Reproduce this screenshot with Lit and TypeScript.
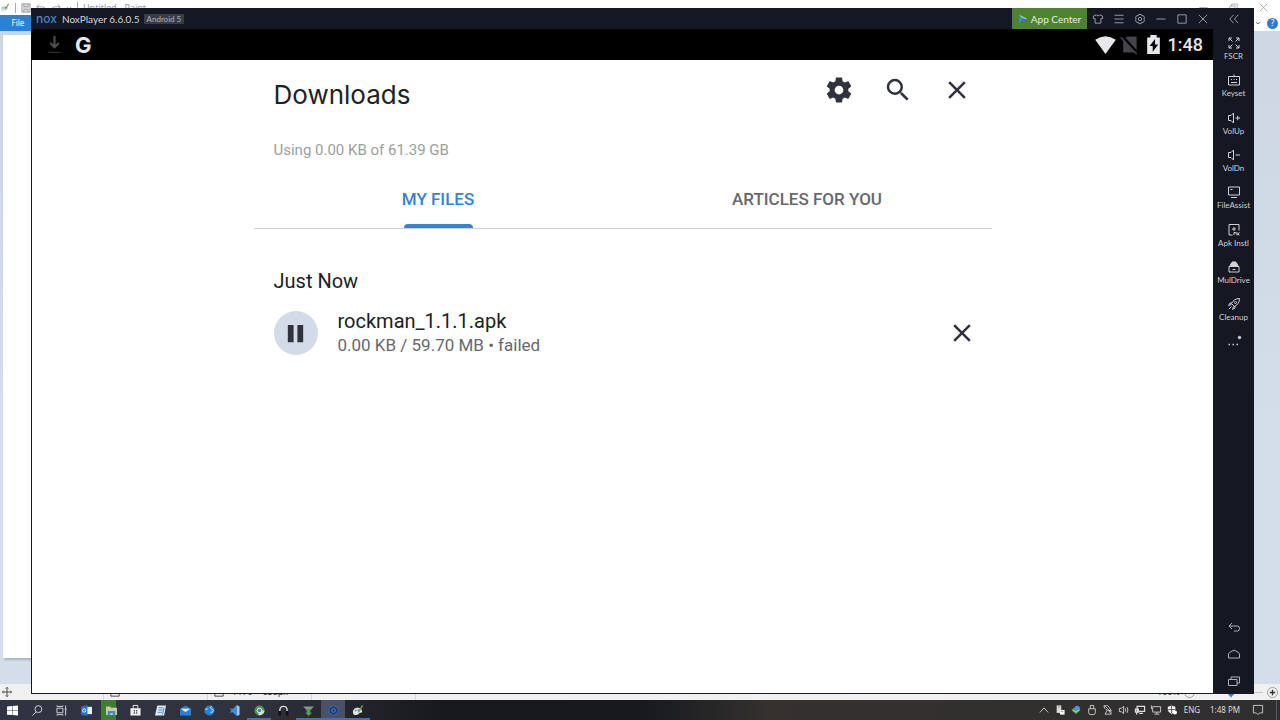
import { LitElement, html, css, svg } from 'lit';
import { customElement, property } from 'lit/decorators.js';

// line icons use currentColor, everything on a 24 unit grid
const ICONS = {
  gear: svg`<path fill="currentColor" d="M19.43 12.98c.04-.32.07-.64.07-.98s-.03-.66-.07-.98l2.11-1.65c.19-.15.24-.42.12-.64l-2-3.46c-.12-.22-.39-.3-.61-.22l-2.49 1c-.52-.4-1.08-.73-1.69-.98l-.38-2.65A.49.49 0 0 0 14 2h-4c-.25 0-.46.18-.49.42l-.38 2.65c-.61.25-1.17.59-1.69.98l-2.49-1c-.23-.09-.49 0-.61.22l-2 3.46c-.13.22-.07.49.12.64l2.11 1.65c-.04.32-.07.65-.07.98s.03.66.07.98l-2.11 1.65c-.19.15-.24.42-.12.64l2 3.46c.12.22.39.3.61.22l2.49-1c.52.4 1.08.73 1.69.98l.38 2.65c.03.24.24.42.49.42h4c.25 0 .46-.18.49-.42l.38-2.65c.61-.25 1.17-.59 1.69-.98l2.49 1c.23.09.49 0 .61-.22l2-3.46c.12-.22.07-.49-.12-.64zM12 15.5a3.5 3.5 0 1 1 0-7 3.5 3.5 0 0 1 0 7z"/>`,
  search: svg`<path fill="currentColor" d="M15.5 14h-.79l-.28-.27A6.47 6.47 0 0 0 16 9.5 6.5 6.5 0 1 0 9.5 16c1.61 0 3.09-.59 4.23-1.57l.27.28v.79l5 4.99L20.49 19zm-6 0a4.5 4.5 0 1 1 0-9 4.5 4.5 0 0 1 0 9z"/>`,
  close: svg`<path fill="currentColor" d="M19 6.41 17.59 5 12 10.59 6.41 5 5 6.41 10.59 12 5 17.59 6.41 19 12 13.41 17.59 19 19 17.59 13.41 12z"/>`,
  pause: svg`<path fill="currentColor" d="M4 3h6v18H4zm10 0h6v18h-6z"/>`,
  play: svg`<path fill="#3f8fe0" d="M3 1v22l8-11z"/><path fill="#7cc4f0" d="M3 1l20 11H11z"/><path fill="#3a6fd0" d="M3 23l20-11H11z"/><circle cx="11" cy="12" r="2.5" fill="#4e8230"/>`,
  shirt: svg`<path d="M8 2 1 5v6h4v11h14V11h4V5l-7-3c-1 3-7 3-8 0z"/>`,
  menu: svg`<path d="M1 3h22M1 12h22M1 21h22"/>`,
  cog: svg`<path d="M9 1h6l1 3 4 0 3 5-2 3 2 3-3 5h-4l-1 3H9l-1-3H4l-3-5 2-3-2-3 3-5h4z"/><circle cx="12" cy="12" r="4"/>`,
  minimize: svg`<path d="M1 12h22"/>`,
  maximize: svg`<path d="M2 2h20v20H2z"/>`,
  cross: svg`<path d="m2 2 20 20M22 2 2 22"/>`,
  collapse: svg`<path d="M11 2 2 12l9 10M22 2l-9 10 9 10"/>`,
  restore: svg`<path d="M2 8h14v14H2zM7 8V3h15v14h-6"/>`,
  chevron: svg`<path d="m3 8 9 8 9-8" stroke-width="4"/>`,
  up: svg`<path d="m2 18 10-11 10 11"/>`,
  fullscreen: svg`<path d="M2 8V2h6M2 2l7 7M22 8V2h-6M22 2l-7 7M2 16v6h6M2 22l7-7M22 16v6h-6M22 22l-7-7"/>`,
  keyset: svg`<path d="M1 5h22v17H1zM12 5V1M6 17h12M6 11h2M11 11h2M16 11h2"/>`,
  volUp: svg`<path d="M11 2v20l-5-5H1V7h5zM15 12h9M19.5 7.5v9"/>`,
  volDown: svg`<path d="M11 2v20l-5-5H1V7h5zM15 12h9"/>`,
  monitor: svg`<path d="M1 2h22v16H1zM6 23h12M5 7h4"/>`,
  apk: svg`<path d="M9 22H2V1h20v12M12 6v8M8 10h8M12 17v5M12 17h3v2M18 16v7M23 17l-4 3 4 2"/>`,
  drive: svg`<path d="M2 11h20v11H2z"/><path fill="currentColor" d="m4 10 2-5h12l2 5zM8 4V2h8v2"/><path d="M9 17h6"/>`,
  rocket: svg`<path d="M23 1c-8 0-13 4-16 10l6 6c6-3 10-8 10-16zM8 10H4l-3 5 6-2M14 16v4l-5 3 2-6M2 22l5-5"/><circle cx="15" cy="9" r="2"/>`,
  more: svg`<path d="M1 17h3M9 17h3M17 17h3" stroke-width="3"/><circle cx="23" cy="3" r="2.5" fill="currentColor"/>`,
  back: svg`<path d="M8 4 2 10l6 6M2 10h17q4 0 4 5t-4 5h-7"/>`,
  home: svg`<path d="M1 12q0-3 11-8 11 5 11 8v8H1z"/>`,
  recent: svg`<path d="M1 9h17v12H1zM6 9V4h17v12h-5"/>`,
  download: svg`<path d="M12 0v14M6 10l6 6 6-6" stroke-width="3"/><path d="M3 23h18" stroke-width="1"/>`,
  wifi: svg`<path fill="currentColor" stroke="none" d="M12 24-1 6q13-9 26 0z"/>`,
  noSim: svg`<path fill="currentColor" stroke="none" d="M9 2h12v20H4V7z"/><path stroke="#000" stroke-width="4" d="m2 1 20 22"/><path d="m1 3 20 21"/>`,
  battery: svg`<path fill="currentColor" stroke="none" d="M4 3h4V0h8v3h4v21H4z"/><path fill="#000" stroke="none" d="M14 5 7 14h4v7l7-9h-4z"/>`,
  save: svg`<path fill="#ddd" d="M2 2h20v20H2z"/><path d="M7 2v7h10V2M7 22v-7h10v7"/>`,
  undo: svg`<path d="M8 3 2 9l6 6M2 9h13q7 0 7 7v6"/>`,
  redo: svg`<path d="m16 3 6 6-6 6M22 9H9q-7 0-7 7v6"/>`,
  move: svg`<path d="M12 1v22M1 12h22M9 4l3-3 3 3M9 20l3 3 3-3M4 9l-3 3 3 3M20 9l3 3-3 3"/>`,
  zoomIn: svg`<circle cx="12" cy="12" r="11" stroke="#999"/><path stroke-width="3" d="M6 12h12M12 6v12"/>`,
  zoomOut: svg`<circle cx="12" cy="12" r="11" stroke="#999"/><path stroke-width="3" d="M6 12h12"/>`,
  windows: svg`<path fill="#fff" stroke="none" d="M0 3l11-1v9H0zM12 2l12-1v10H12zM0 12h11v10L0 21zM12 12h12v11l-12-1z"/>`,
  find: svg`<circle cx="14" cy="9" r="7.5"/><path d="m9 15-8 8"/>`,
  taskView: svg`<path d="M2 7h13v10H2zM2 3V1M15 3V1M2 21v2M15 21v2M2 3h13M2 21h13M21 1v22M19 9h4"/>`,
  outlook: svg`<path fill="#e8eef6" stroke="none" d="M12 4h12v16H12z"/><path fill="#2a72c4" stroke="none" d="M0 3l14-3v24L0 21z"/><circle cx="7" cy="12" r="3.5" stroke="#fff"/>`,
  explorer: svg`<path fill="#ccc8a8" stroke="none" d="M0 3h9l2 3h13v16H0z"/><path fill="#3b88dc" stroke="none" d="M4 13h16v10h-5v-5H9v5H4z"/>`,
  store: svg`<path fill="#f2f2f2" stroke="none" d="M1 7h22v16H1z"/><path stroke="#f2f2f2" d="M7 7V1h10v6"/><path fill="#555" stroke="none" d="M8 11h3v3H8zM13 11h3v3h-3zM8 16h3v3H8zM13 16h3v3h-3z"/>`,
  notes: svg`<path fill="#dce8f4" stroke="none" d="M5 1h19l-4 22H0z"/><path stroke="#5184ba" d="M8 6h10M7 11h10M6 16h9M20 6l-4 15"/>`,
  mail: svg`<path fill="#2382dc" stroke="none" d="M0 8 12 1l12 7v15H0z"/><path fill="#fff" stroke="none" d="M2 8h20l-10 7z"/>`,
  globe: svg`<circle cx="12" cy="12" r="11" fill="#2585dd" stroke="none"/><path stroke="#e2f2ff" d="M17 3c-5 1-3 5 1 6s2 8-4 7M3 9h5"/>`,
  code: svg`<path fill="#3d8edb" stroke="none" d="M1 6 7 9l10-9v24L7 15l-6 3 4-6z"/><path fill="#9ecaf0" stroke="none" d="m17 0 6 3v18l-6 3z"/>`,
  chrome: svg`<circle cx="12" cy="12" r="11" fill="#4a9a50" stroke="none"/><path fill="#ddd8c0" stroke="none" d="M12 12h11a11 11 0 0 1-14 10z"/><circle cx="12" cy="12" r="5" fill="#3b82d6" stroke="#fff"/>`,
  headset: svg`<path d="M4 17v-5C4 0 20 0 20 12v5" stroke="#ddd" stroke-width="3"/><path fill="#111" stroke="none" d="M1 13h6v10H1zM17 13h6v10h-6z"/>`,
  arrow: svg`<path fill="#8b9496" stroke="none" d="M0 3h24l-9 9H9z"/><path fill="#54a046" stroke="none" d="M8 9h8v8h4l-8 7-7-7h3z"/>`,
  nox: svg`<path fill="#243a68" stroke="#3c6cb8" d="m12 1 10 6v10l-10 6-10-6V7z"/><circle cx="12" cy="12" r="4" stroke="#5388d4"/>`,
  paint: svg`<path fill="#dfe7e7" stroke="none" d="M2 15C2 3 21 3 22 13c1 6-5 2-6 5s-14 8-14-3z"/><circle cx="8" cy="12" r="2" fill="#478fcf" stroke="none"/><circle cx="14" cy="11" r="2" fill="#b0524b" stroke="none"/><path stroke="#67a850" d="M14 16 23 1" stroke-width="3"/>`,
  trayDoc: svg`<path fill="#ddd" stroke="none" d="M4 1h11v18H4z"/><path fill="#fff" stroke="none" d="M12 12h11v11H12z"/><path stroke="#777" d="M7 5h5M14 16h6"/>`,
  trayEye: svg`<path fill="#4ea250" stroke="none" d="M1 12 12 3l11 9-11 10z"/><circle cx="15" cy="8" r="6" fill="#4f98d8" stroke="none"/><path d="m4 12 8 5 8-5"/>`,
  usb: svg`<path d="M8 9V1h8v8M4 9h16v9q0 5-5 5H9q-5 0-5-5z"/>`,
  satellite: svg`<path fill="#111" d="M2 2q2 12 18 12L12 2z"/><path d="m10 13-5 9h15l-6-8M3 1l18 17"/>`,
  speaker: svg`<path d="M11 3v18l-5-5H1V8h5zM15 8q3 4 0 8M19 5q5 7 0 14"/>`,
  cable: svg`<path d="M5 3h18v12H5zM10 20h9M1 10h7v7H1zM4 17v6" stroke-width="3"/>`,
  network: svg`<path d="M4 4h19v13H4zM8 22h12M14 17v5M1 1v9"/>`,
  shield: svg`<path fill="#f5f5f5" stroke="none" d="m11 1 9 3v8q-1 6-9 10-8-4-9-10V4z"/><path stroke="#444" d="M11 2v18M3 11h16"/><circle cx="19" cy="18" r="5" fill="#fff" stroke="none"/>`,
  notice: svg`<path d="M1 1h22v18h-7l-4 4-4-4H1z"/>`,
};

@customElement('ui-icon')
export class UiIcon extends LitElement {
  @property() name = '';

  static styles = css`
    :host {
      display: block;
      flex: none;
      width: var(--icon-size, 12px);
      height: var(--icon-size, 12px);
    }

    svg {
      display: block;
      width: 100%;
      height: 100%;
      overflow: visible;
    }
  `;

  render() {
    return html`
      <svg viewBox="0 0 24 24" fill="none" stroke="currentColor" stroke-width="${this.hasAttribute('solid') ? 0 : 2}" aria-hidden="true">
        ${ICONS[this.name]}
      </svg>
    `;
  }
}

const controls = css`
  * {
    box-sizing: border-box;
  }

  button {
    display: flex;
    align-items: center;
    justify-content: center;
    margin: 0;
    padding: 0;
    border: 0;
    background: none;
    color: inherit;
    font: inherit;
    white-space: nowrap;
  }
`;

@customElement('paint-window')
export class PaintWindow extends LitElement {
  static styles = [controls, css`
    :host {
      display: flex;
      flex-direction: column;
      height: 100%;
      background: #fff;
      color: #777;
      font: 9px/12px "Noto Sans", sans-serif;
      --icon-size: 10px;
    }

    .title {
      display: flex;
      align-items: center;
      height: 15px;
      gap: 5px;
      color: #999;
    }

    .logo {
      width: 16px;
      padding-right: 6px;
      border-right: 1px solid #aaa;
      color: #4d8fc4;
    }

    .more {
      --icon-size: 6px;
    }

    .name {
      border-left: 1px solid #aaa;
      padding-left: 5px;
    }

    .buttons {
      display: flex;
      gap: 21px;
      margin-left: auto;
      padding-right: 12px;
      --icon-size: 9px;
    }

    .ribbon {
      display: flex;
      justify-content: space-between;
      height: 16px;
    }

    .file {
      width: 36px;
      background: #2b81d6;
      color: #fff;
      font-size: 8px;
    }

    .help {
      display: flex;
      align-items: center;
      gap: 6px;
      padding-right: 2px;
      --icon-size: 6px;
    }

    .question {
      width: 11px;
      height: 11px;
      border-radius: 50%;
      background: #2b7cd3;
      color: #fff;
      font-size: 8px;
    }

    .workspace {
      flex: 1;
      padding: 4px 60px 26px 3px;
      background: linear-gradient(#cdd6e2, #d3deea 60%);
    }

    .canvas {
      height: 100%;
      background: #fff;
      box-shadow: 1px 2px 2px #a9b3bf;
    }

    .status {
      display: grid;
      grid-template-columns: 104px 104px 104px 104px 1fr auto;
      align-items: center;
      height: 16px;
      background: #f0f0f1;
      color: #333;
    }

    .cell {
      display: flex;
      align-items: center;
      gap: 8px;
      height: 100%;
      padding-left: 2px;
      border-right: 1px solid #d5d5d8;
    }

    .cell:nth-child(n + 2) {
      padding-left: 6px;
    }

    .zoom {
      display: flex;
      align-items: center;
      gap: 4px;
      padding-right: 2px;
      --icon-size: 11px;
    }

    .zoom input {
      appearance: none;
      width: 64px;
      height: 11px;
      margin: 0;
      background: linear-gradient(#bcc4d4, #bcc4d4) center / 100% 1px no-repeat;
    }

    .zoom input::-webkit-slider-thumb {
      appearance: none;
      width: 8px;
      height: 11px;
      background: #2b81d6;
      clip-path: polygon(0 0, 100% 0, 100% 60%, 50% 100%, 0 60%);
    }
  `];

  render() {
    return html`
      <header class="title">
        <ui-icon class="logo" name="paint"></ui-icon>
        <ui-icon name="save"></ui-icon>
        <ui-icon name="undo"></ui-icon>
        <ui-icon name="redo"></ui-icon>
        <ui-icon class="more" name="chevron"></ui-icon>
        <span class="name">Untitled - Paint</span>
        <div class="buttons">
          <button aria-label="Minimize"><ui-icon name="minimize"></ui-icon></button>
          <button aria-label="Restore"><ui-icon name="restore"></ui-icon></button>
          <button aria-label="Close"><ui-icon name="cross"></ui-icon></button>
        </div>
      </header>
      <nav class="ribbon">
        <button class="file">File</button>
        <div class="help">
          <button aria-label="Expand ribbon"><ui-icon name="chevron"></ui-icon></button>
          <button class="question">?</button>
        </div>
      </nav>
      <section class="workspace"><div class="canvas"></div></section>
      <footer class="status">
        <div class="cell"><ui-icon name="move"></ui-icon></div>
        <div class="cell"><ui-icon name="maximize"></ui-icon></div>
        <div class="cell"><ui-icon name="maximize"></ui-icon>1170 × 658px</div>
        <div class="cell"></div>
        <div></div>
        <div class="zoom">
          <label for="zoom">100%</label>
          <ui-icon name="zoomOut"></ui-icon>
          <input id="zoom" type="range" min="0" max="100" value="50">
          <ui-icon name="zoomIn"></ui-icon>
        </div>
      </footer>
    `;
  }
}

@customElement('downloads-page')
export class DownloadsPage extends LitElement {
  static styles = [controls, css`
    :host {
      display: block;
      background: #fff;
      color: #202124;
      font-family: Roboto, sans-serif;
    }

    main {
      width: 100%;
      max-width: 738px;
      margin: 0 auto;
    }

    header {
      display: flex;
      justify-content: space-between;
      padding: 12px 17px 0 20px;
    }

    h1 {
      margin: 5px 0 0;
      font: 400 26px/36px Inter, sans-serif;
    }

    .actions {
      display: flex;
      gap: 24px;
      color: #30323e;
      --icon-size: 30px;
    }

    .actions button,
    .cancel {
      width: 35px;
      height: 35px;
    }

    .usage {
      margin: 27px 20px 0;
      color: #9b9da0;
      font-size: 15px;
      line-height: 20px;
    }

    .tabs {
      display: grid;
      grid-template-columns: 1fr 1fr;
      margin-top: 10px;
      border-bottom: 1px solid #cfd0dc;
    }

    .tab {
      position: relative;
      height: 58px;
      color: #66686c;
      font-size: 17px;
      font-weight: 500;
    }

    .tab.active {
      color: #3482d4;
    }

    .tab.active::after {
      content: '';
      position: absolute;
      bottom: 0;
      width: 69px;
      height: 4px;
      border-radius: 4px 4px 0 0;
      background: #3482d4;
    }

    h2 {
      margin: 40px 20px 0;
      font-size: 20px;
      font-weight: 400;
      line-height: 24px;
    }

    .item {
      display: flex;
      align-items: center;
      padding: 16px 12px 0 20px;
    }

    .pause {
      width: 44px;
      height: 44px;
      margin-right: 20px;
      border-radius: 50%;
      background: #d2dbe7;
      color: #30323e;
      --icon-size: 23px;
    }

    .cancel {
      margin-left: auto;
      color: #30323e;
      --icon-size: 30px;
    }

    .file {
      font-size: 20px;
      line-height: 24px;
    }

    .state {
      color: #66686c;
      font-size: 17px;
      line-height: 24px;
    }
  `];

  render() {
    return html`
      <main>
        <header>
          <h1>Downloads</h1>
          <div class="actions">
            <button aria-label="Settings"><ui-icon solid name="gear"></ui-icon></button>
            <button aria-label="Search"><ui-icon solid name="search"></ui-icon></button>
            <button aria-label="Close"><ui-icon solid name="close"></ui-icon></button>
          </div>
        </header>
        <p class="usage">Using 0.00 KB of 61.39 GB</p>
        <nav class="tabs">
          <button class="tab active">MY FILES</button>
          <button class="tab">ARTICLES FOR YOU</button>
        </nav>
        <h2>Just Now</h2>
        <section class="item">
          <button class="pause" aria-label="Pause"><ui-icon solid name="pause"></ui-icon></button>
          <div>
            <div class="file">rockman_1.1.1.apk</div>
            <div class="state">0.00 KB / 59.70 MB • failed</div>
          </div>
          <button class="cancel" aria-label="Cancel download"><ui-icon solid name="close"></ui-icon></button>
        </section>
      </main>
    `;
  }
}

@customElement('nox-player')
export class NoxPlayer extends LitElement {
  tools = [
    { icon: 'fullscreen', label: 'FSCR' },
    { icon: 'keyset', label: 'Keyset' },
    { icon: 'volUp', label: 'VolUp' },
    { icon: 'volDown', label: 'VolDn' },
    { icon: 'monitor', label: 'FileAssist' },
    { icon: 'apk', label: 'Apk Instl' },
    { icon: 'drive', label: 'MulDrive' },
    { icon: 'rocket', label: 'Cleanup' },
    { icon: 'more', label: '' },
  ];

  static styles = [controls, css`
    :host {
      display: grid;
      grid-template-columns: 1fr 41px;
      background: #151822;
      color: #b0b2b8;
      font: 10px/14px Lato, sans-serif;
    }

    .screen {
      display: flex;
      flex-direction: column;
    }

    .title {
      display: flex;
      align-items: center;
      height: 21px;
      padding-left: 5px;
    }

    .brand {
      color: #4683cb;
      font: 500 12px/14px Inter, sans-serif;
    }

    .name {
      margin-left: 5px;
      color: #d6d7da;
    }

    .badge {
      margin-left: 4px;
      padding: 0 3px;
      border-radius: 1px;
      background: #3a3c44;
      font-size: 8px;
      line-height: 10px;
    }

    .controls {
      display: flex;
      height: 100%;
      margin-left: auto;
      --icon-size: 10px;
    }

    .controls button {
      width: 21px;
    }

    .controls .center {
      gap: 3px;
      width: 75px;
      background: #4e8230;
      color: #e6ebe2;
    }

    .android {
      display: flex;
      align-items: center;
      height: 31px;
      padding: 0 10px 0 15px;
      background: #000;
      color: #e8e8ec;
    }

    .pending {
      color: #505050;
      --icon-size: 17px;
    }

    .google {
      margin-left: 12px;
      font: 700 22px/32px Inter, sans-serif;
    }

    .signals {
      display: flex;
      align-items: center;
      gap: 5px;
      margin-left: auto;
      --icon-size: 19px;
    }

    .sim {
      color: #44444c;
    }

    .time {
      font: 500 18px/32px Roboto, sans-serif;
    }

    downloads-page {
      flex: 1;
      margin: 0 0 1px 1px;
    }

    .rail {
      display: flex;
      flex-direction: column;
      --icon-size: 12px;
    }

    .collapse {
      height: 21px;
      --icon-size: 10px;
    }

    .tools {
      display: grid;
      grid-auto-rows: 1fr;
      height: 336px;
      margin-top: 8px;
    }

    .tools button {
      flex-direction: column;
      justify-content: flex-start;
      gap: 2px;
      font-size: 8px;
      line-height: 11px;
      color: #d0d1d5;
    }

    .keys {
      display: flex;
      flex-direction: column;
      margin-top: auto;
    }

    .keys button {
      height: 27px;
    }
  `];

  render() {
    return html`
      <section class="screen">
        <header class="title">
          <span class="brand">nox</span>
          <span class="name">NoxPlayer 6.6.0.5</span>
          <span class="badge">Android 5</span>
          <div class="controls">
            <button class="center"><ui-icon solid name="play"></ui-icon>App Center</button>
            ${['shirt', 'menu', 'cog', 'minimize', 'maximize', 'cross'].map((icon) => html`
              <button aria-label="${icon}"><ui-icon name="${icon}"></ui-icon></button>
            `)}
          </div>
        </header>
        <div class="android">
          <ui-icon class="pending" name="download"></ui-icon>
          <span class="google">G</span>
          <div class="signals">
            <ui-icon name="wifi"></ui-icon>
            <ui-icon class="sim" name="noSim"></ui-icon>
            <ui-icon name="battery"></ui-icon>
            <span class="time">1:48</span>
          </div>
        </div>
        <downloads-page></downloads-page>
      </section>
      <aside class="rail">
        <button class="collapse" aria-label="Collapse"><ui-icon name="collapse"></ui-icon></button>
        <div class="tools">
          ${this.tools.map((tool) => html`
            <button aria-label="${tool.label || 'More'}">
              <ui-icon name="${tool.icon}"></ui-icon>
              <span>${tool.label}</span>
            </button>
          `)}
        </div>
        <div class="keys">
          ${['back', 'home', 'recent'].map((icon) => html`
            <button aria-label="${icon}"><ui-icon name="${icon}"></ui-icon></button>
          `)}
        </div>
      </aside>
    `;
  }
}

@customElement('task-bar')
export class TaskBar extends LitElement {
  apps = ['windows', 'find', 'taskView', 'outlook', 'explorer', 'store', 'notes', 'mail',
    'globe', 'code', 'chrome', 'headset', 'arrow', 'nox', 'paint'];
  running = ['chrome', 'arrow', 'nox', 'paint'];
  tray = ['up', 'trayDoc', 'trayEye', 'usb', 'satellite', 'speaker', 'cable', 'network', 'shield'];

  static styles = [controls, css`
    :host {
      display: flex;
      justify-content: space-between;
      height: 20px;
      background: linear-gradient(90deg, #303343 0, #30323c 20%, #17181c 35%, #17191e 50%, #34312f 60%, #302f2f 100%);
      color: #ddd;
      font: 9px/12px "Noto Sans", sans-serif;
      --icon-size: 11px;
    }

    .apps {
      display: flex;
      width: 370px;
    }

    .apps button {
      flex: 1;
      border-bottom: 2px solid transparent;
      padding-top: 2px;
    }

    .apps .running {
      border-color: #3b74b8;
    }

    .apps .nox {
      background: #48506a;
    }

    .apps .explorer {
      background: linear-gradient(90deg, transparent 10%, #3f7d31 10%, #3f7d31 70%, transparent 70%);
    }

    .tray {
      display: flex;
      align-items: center;
      --icon-size: 10px;
    }

    .tray button {
      width: 16px;
      height: 20px;
    }

    .tray .lang {
      width: 24px;
      font-size: 8px;
    }

    .tray .clock {
      width: 42px;
      font-size: 8px;
    }

    .tray .notice {
      width: 24px;
      margin-right: 6px;
    }

    .peek {
      width: 4px;
      height: 20px;
      border-left: 1px solid #555a70;
    }
  `];

  render() {
    return html`
      <nav class="apps">
        ${this.apps.map((app) => html`
          <button class="${app} ${this.running.includes(app) ? 'running' : ''}" aria-label="${app}">
            <ui-icon name="${app}"></ui-icon>
          </button>
        `)}
      </nav>
      <div class="tray">
        ${this.tray.map((item) => html`
          <button aria-label="${item}"><ui-icon name="${item}"></ui-icon></button>
        `)}
        <button class="lang">ENG</button>
        <button class="clock">1:48 PM</button>
        <button class="notice" aria-label="Notifications"><ui-icon name="notice"></ui-icon></button>
        <div class="peek"></div>
      </div>
    `;
  }
}

@customElement('app-root')
export class AppRoot extends LitElement {
  static styles = css`
    :host {
      display: flex;
      flex-direction: column;
      height: 100vh;
      overflow: hidden;
    }

    .desktop {
      position: relative;
      flex: 1;
      min-height: 0;
    }

    /* the player floats over the paint window */
    nox-player {
      position: absolute;
      inset: 8px 26px 6px 31px;
    }
  `;

  render() {
    return html`
      <div class="desktop">
        <paint-window></paint-window>
        <nox-player></nox-player>
      </div>
      <task-bar></task-bar>
    `;
  }
}
